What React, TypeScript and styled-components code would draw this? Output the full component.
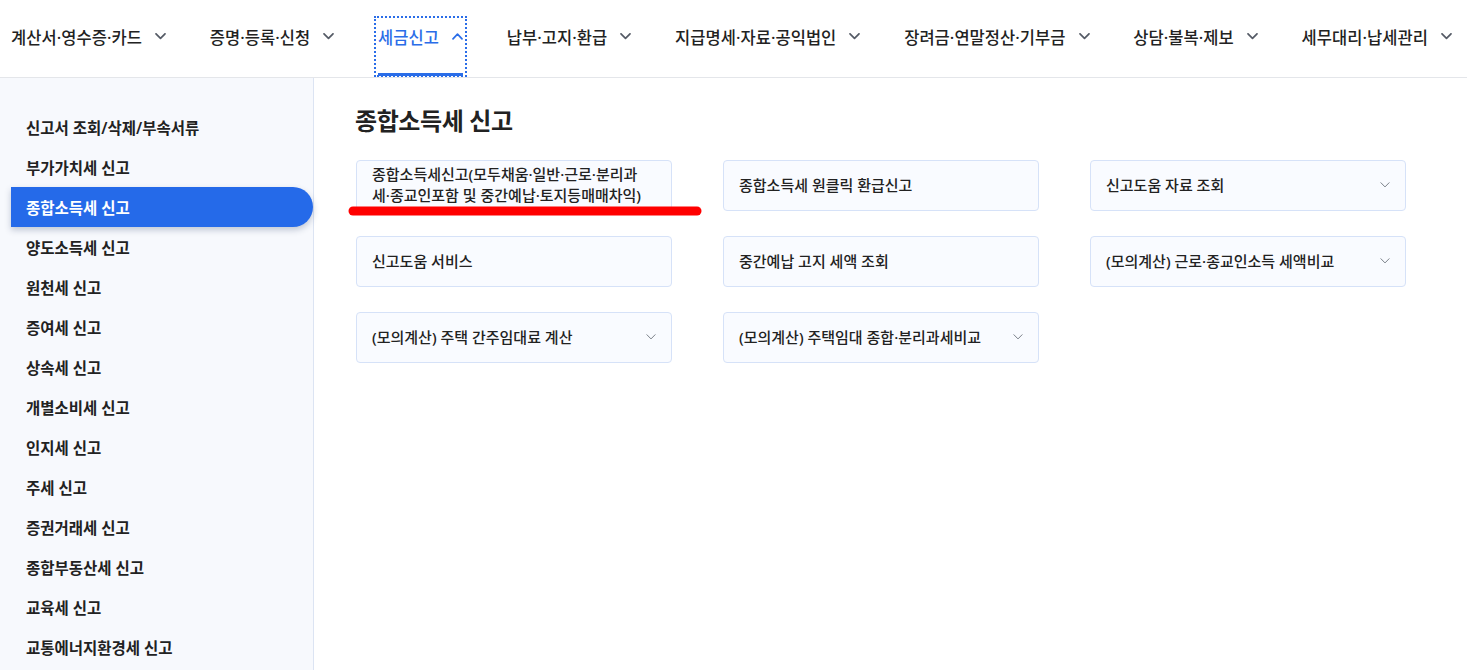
import React from "react";
import styled, { createGlobalStyle } from "styled-components";

const Global = createGlobalStyle`
  html, body { margin: 0; padding: 0; overflow: hidden; background: #fff; }
  body { font-family: "Noto Sans", "Noto Sans CJK KR", sans-serif; color: #222; }
  * { box-sizing: border-box; }
`;

const Page = styled.div`
  width: 1467px;
  height: 670px;
  display: flex;
  flex-direction: column;
  overflow: hidden;
`;

const Header = styled.header`
  height: 78px;
  flex: none;
  display: flex;
  justify-content: space-between;
  align-items: flex-end;
  padding: 0 12px 1px 8px;
  border-bottom: 1px solid #e4e6ea;
`;

const NavItem = styled.a<{ $active?: boolean }>`
  position: relative;
  height: 59px;
  padding: 0 3px 20px;
  display: flex;
  align-items: center;
  gap: 13px;
  font-size: 16.5px;
  font-weight: 500;
  letter-spacing: 0.05px;
  color: ${(p) => (p.$active ? "#2a6de8" : "#222")};
  outline: ${(p) => (p.$active ? "2px dotted #2a6de8" : "none")};
  outline-offset: -1px;
  white-space: nowrap;
  &::after {
    content: "";
    display: ${(p) => (p.$active ? "block" : "none")};
    position: absolute;
    left: 3px;
    right: 3px;
    bottom: 0;
    height: 3px;
    background: #2a6de8;
  }
`;

const Body = styled.div`
  flex: 1;
  display: flex;
  min-height: 0;
`;

const Side = styled.nav`
  width: 314px;
  flex: none;
  background: #f7f9fd;
  border-right: 1px solid #dce4f3;
  padding-top: 29px;
  display: flex;
  flex-direction: column;
`;

const SideItem = styled.a<{ $active?: boolean }>`
  flex: none;
  height: 40px;
  margin-left: 11px;
  padding-left: 15px;
  display: flex;
  align-items: center;
  font-size: 15.5px;
  font-weight: 600;
  letter-spacing: 0;
  white-space: nowrap;
  color: ${(p) => (p.$active ? "#fff" : "#222")};
  background: ${(p) => (p.$active ? "#256ae9" : "transparent")};
  border-radius: 0 20px 20px 0;
  box-shadow: ${(p) => (p.$active ? "0 3px 6px rgba(30, 50, 90, 0.25)" : "none")};
`;

const Main = styled.main`
  position: relative;
  flex: 1;
  padding: 27px 0 0 41px;
`;

const Title = styled.h2`
  margin: 0 0 23px;
  font-size: 24px;
  font-weight: 700;
  letter-spacing: -0.4px;
  line-height: 32px;
  color: #222;
`;

const Grid = styled.div`
  display: grid;
  grid-template-columns: repeat(3, 316px);
  column-gap: 51px;
  row-gap: 25px;
  margin-left: 1px;
`;

const Card = styled.a`
  position: relative;
  min-height: 51px;
  display: flex;
  align-items: center;
  justify-content: space-between;
  gap: 12px;
  padding: 0 15px 1px 15px;
  background: #f9fbff;
  border: 1px solid #d6e2f8;
  border-radius: 4px;
  font-size: 15px;
  font-weight: 500;
  letter-spacing: 0;
  line-height: 21px;
  color: #222;
`;

const CardText = styled.span`
  flex: 1;
`;

const Mark = styled.svg`
  position: absolute;
  left: 33px;
  top: 125px;
  pointer-events: none;
`;

const Chevron = ({ up, color, size = 11, weight = 1.7 }: { up?: boolean; color: string; size?: number; weight?: number }) => (
  <svg width={size} height={size * 0.6} viewBox="0 0 11 6.6" style={{ flex: "none" }}>
    <path
      d={up ? "M1 5.8 L5.5 1.2 L10 5.8" : "M1 0.8 L5.5 5.4 L10 0.8"}
      fill="none"
      stroke={color}
      strokeWidth={weight}
      strokeLinecap="round"
      strokeLinejoin="round"
    />
  </svg>
);

const navs = [
  "계산서·영수증·카드",
  "증명·등록·신청",
  "세금신고",
  "납부·고지·환급",
  "지급명세·자료·공익법인",
  "장려금·연말정산·기부금",
  "상담·불복·제보",
  "세무대리·납세관리",
];

const sides = [
  "신고서 조회/삭제/부속서류",
  "부가가치세 신고",
  "종합소득세 신고",
  "양도소득세 신고",
  "원천세 신고",
  "증여세 신고",
  "상속세 신고",
  "개별소비세 신고",
  "인지세 신고",
  "주세 신고",
  "증권거래세 신고",
  "종합부동산세 신고",
  "교육세 신고",
  "교통에너지환경세 신고",
];

const cards: { text: React.ReactNode; more?: boolean }[] = [
  { text: <>종합소득세신고(모두채움·일반·근로·분리과<br />세·종교인포함 및 중간예납·토지등매매차익)</> },
  { text: "종합소득세 원클릭 환급신고" },
  { text: "신고도움 자료 조회", more: true },
  { text: "신고도움 서비스" },
  { text: "중간예납 고지 세액 조회" },
  { text: "(모의계산) 근로·종교인소득 세액비교", more: true },
  { text: "(모의계산) 주택 간주임대료 계산", more: true },
  { text: "(모의계산) 주택임대 종합·분리과세비교", more: true },
];

export default function App() {
  return (
    <Page>
      <Global />
      <Header>
        {navs.map((n) => {
          const active = n === "세금신고";
          return (
            <NavItem key={n} $active={active}>
              {n}
              <Chevron up={active} color={active ? "#2a6de8" : "#555b66"} />
            </NavItem>
          );
        })}
      </Header>
      <Body>
        <Side>
          {sides.map((s) => (
            <SideItem key={s} $active={s === "종합소득세 신고"}>
              {s}
            </SideItem>
          ))}
        </Side>
        <Main>
          <Title>종합소득세 신고</Title>
          <Grid>
            {cards.map((c, i) => (
              <Card key={i}>
                <CardText>{c.text}</CardText>
                {c.more && <Chevron color="#7b8089" size={10} weight={1.1} />}
              </Card>
            ))}
          </Grid>
          <Mark width="364" height="16" viewBox="0 0 364 16">
            <line x1="6" y1="8" x2="350" y2="8" stroke="#ff0000" strokeWidth="9" strokeLinecap="round" />
          </Mark>
        </Main>
      </Body>
    </Page>
  );
}
